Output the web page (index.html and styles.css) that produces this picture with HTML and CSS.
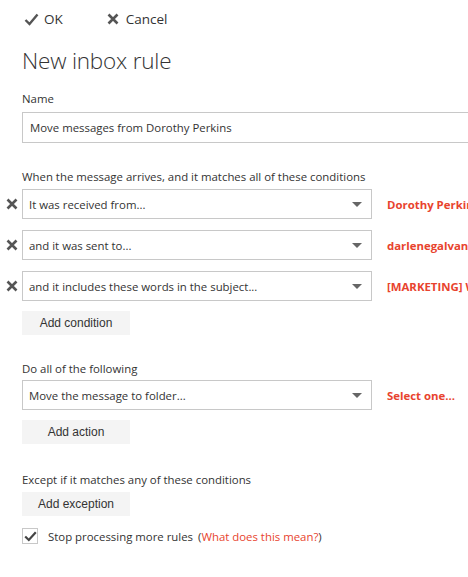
FILE: index.html
```html
<!DOCTYPE html>
<html>
<head>
<meta charset="utf-8">
<link rel="stylesheet" href="styles.css">
</head>
<body>
<div class="toolbar">
  <span class="tb-item"><svg class="tb-icon" width="15" height="13" viewBox="0 0 15 13"><path d="M1.5 7 L5.5 11 L13.5 1.5" fill="none" stroke="#555" stroke-width="2.4"/></svg>OK</span>
  <span class="tb-item cancel"><svg class="tb-icon" width="12" height="12" viewBox="0 0 12 12"><path d="M1.5 1.5 L10.5 10.5 M10.5 1.5 L1.5 10.5" fill="none" stroke="#555" stroke-width="2.6"/></svg>Cancel</span>
</div>
<div class="page">
  <h1 class="title">New inbox rule</h1>
  <div class="label">Name</div>
  <div class="name-input">Move messages from Dorothy Perkins</div>

  <div class="label section">When the message arrives, and it matches all of these conditions</div>
  <div class="rows">
    <div class="row">
      <svg class="remove" width="12" height="12" viewBox="0 0 12 12"><path d="M1.5 1.5 L10.5 10.5 M10.5 1.5 L1.5 10.5" fill="none" stroke="#555" stroke-width="2.6"/></svg>
      <div class="select"><span>It was received from...</span><span class="caret"></span></div>
      <span class="value">Dorothy Perkins</span>
    </div>
    <div class="row">
      <svg class="remove" width="12" height="12" viewBox="0 0 12 12"><path d="M1.5 1.5 L10.5 10.5 M10.5 1.5 L1.5 10.5" fill="none" stroke="#555" stroke-width="2.6"/></svg>
      <div class="select"><span>and it was sent to...</span><span class="caret"></span></div>
      <span class="value">darlenegalvan@contoso.com</span>
    </div>
    <div class="row">
      <svg class="remove" width="12" height="12" viewBox="0 0 12 12"><path d="M1.5 1.5 L10.5 10.5 M10.5 1.5 L1.5 10.5" fill="none" stroke="#555" stroke-width="2.6"/></svg>
      <div class="select"><span>and it includes these words in the subject...</span><span class="caret"></span></div>
      <span class="value">[MARKETING] Weekly</span>
    </div>
  </div>
  <button class="btn">Add condition</button>

  <div class="label section2">Do all of the following</div>
  <div class="row action">
    <div class="select"><span>Move the message to folder...</span><span class="caret"></span></div>
    <span class="value">Select one...</span>
  </div>
  <button class="btn">Add action</button>

  <div class="label section3">Except if it matches any of these conditions</div>
  <button class="btn">Add exception</button>

  <div class="check-row">
    <span class="checkbox"><svg width="13" height="11" viewBox="0 0 13 11"><path d="M1.2 5.5 L4.8 9 L11.8 1.2" fill="none" stroke="#444" stroke-width="2.2"/></svg></span>
    <span class="check-label">Stop processing more rules</span>
    <span class="link">(<span class="red">What does this mean?</span>)</span>
  </div>
</div>
</body>
</html>
```
FILE: styles.css
```css
html, body {
  margin: 0;
  padding: 0;
  background: #fff;
  overflow: hidden;
}
body {
  font-family: "Open Sans", "Segoe UI", sans-serif;
  color: #333;
  font-size: 11.4px;
  width: 468px;
}
.toolbar {
  display: flex;
  align-items: center;
  height: 38px;
  padding-left: 24px;
  font-size: 13.5px;
  color: #333;
}
.tb-item {
  display: flex;
  align-items: center;
}
.tb-icon {
  margin-right: 5px;
}
.cancel {
  margin-left: 44px;
}
.cancel .tb-icon {
  margin-right: 7px;
}
.page {
  padding-left: 22px;
}
.title {
  margin: 8px 0 0 0;
  font-size: 22.5px;
  font-weight: 300;
  color: #333;
  line-height: 30px;
  letter-spacing: -0.2px;
}
.label {
  line-height: 16px;
  margin-top: 15px;
}
.name-input {
  margin-top: 5px;
  width: 460px;
  height: 29px;
  border: 1px solid #c8c8c8;
  line-height: 29px;
  padding-left: 7px;
  white-space: nowrap;
}
.section {
  margin-top: 26px;
}
.rows {
  margin-top: 4px;
  display: flex;
  flex-direction: column;
  gap: 11px;
}
.row {
  display: flex;
  align-items: center;
  position: relative;
  white-space: nowrap;
}
.remove {
  position: absolute;
  left: -16px;
  top: 9px;
}
.select {
  box-sizing: border-box;
  width: 350px;
  height: 30px;
  border: 1px solid #c8c8c8;
  display: flex;
  align-items: center;
  justify-content: space-between;
  padding: 0 9px 0 6px;
  flex: none;
}
.caret {
  width: 0;
  height: 0;
  border-left: 5px solid transparent;
  border-right: 5px solid transparent;
  border-top: 5px solid #666;
}
.value {
  margin-left: 15px;
  color: #e8432e;
  font-weight: 700;
}
.btn {
  display: block;
  margin-top: 10px;
  width: 108px;
  height: 24px;
  background: #f4f4f4;
  border: none;
  padding: 0;
  font-family: "Liberation Sans", Arial, sans-serif;
  font-size: 12px;
  color: #333;
}
.section2 {
  margin-top: 26px;
}
.action {
  margin-top: 3px;
}
.section3 {
  margin-top: 28px;
}
.section3 + .btn {
  margin-top: 4px;
}
.check-row {
  display: flex;
  align-items: center;
  margin-top: 12px;
}
.checkbox {
  width: 14px;
  height: 14px;
  border: 1px solid #c8c8c8;
  display: flex;
  align-items: center;
  justify-content: center;
}
.check-label {
  margin-left: 10px;
}
.link {
  margin-left: 5px;
}
.red {
  color: #e8432e;
}
```
